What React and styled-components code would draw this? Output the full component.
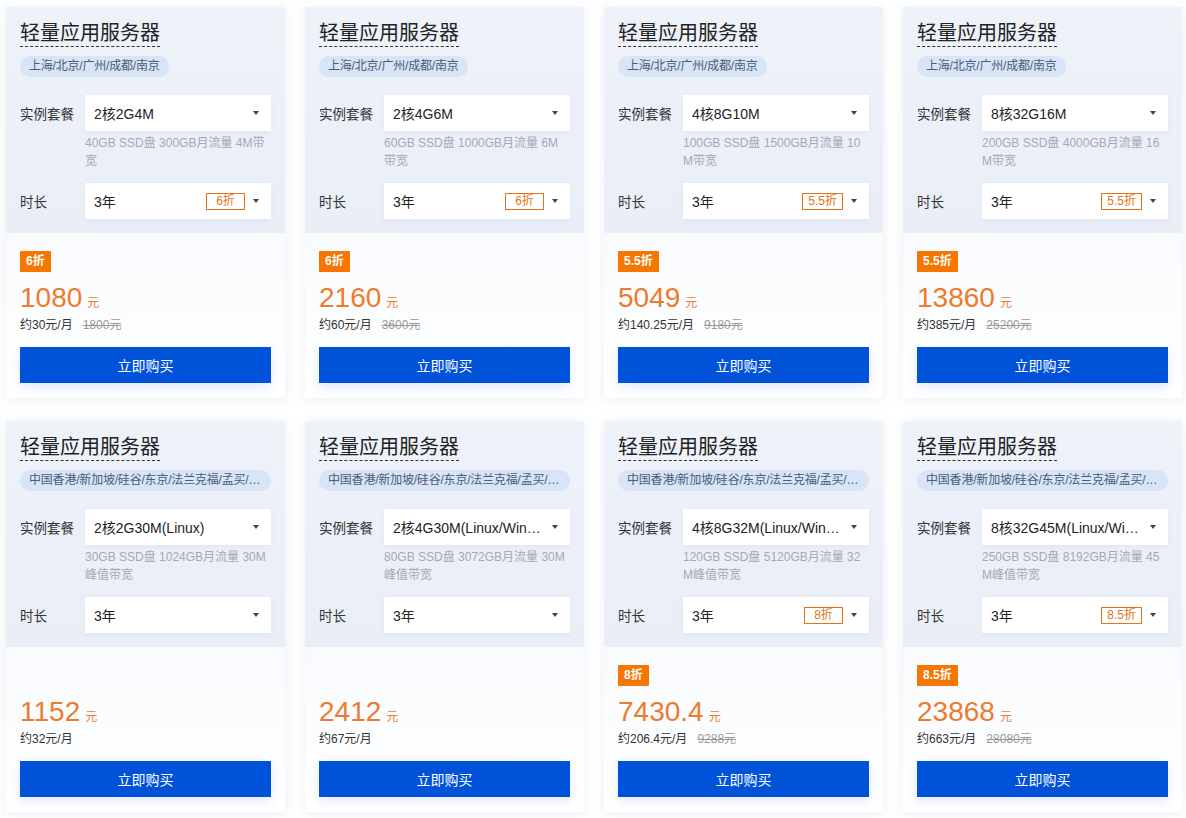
import React from "react";
import styled, { createGlobalStyle } from "styled-components";

const Global = createGlobalStyle`
  html, body { margin: 0; padding: 0; background: #ffffff; }
  body { font-family: "Liberation Sans", "Noto Sans CJK SC", sans-serif; color: #333; }
  * { box-sizing: border-box; }
`;

const Page = styled.div`
  padding: 7px 4px 6px 6px;
  display: grid;
  grid-template-columns: repeat(4, 279px);
  column-gap: 20px;
  row-gap: 23px;
`;

const Card = styled.div`
  display: flex;
  flex-direction: column;
  background: #fff;
  box-shadow: 0 2px 12px rgba(60, 90, 150, 0.1);
`;

const Head = styled.div`
  padding: 13px 14px 14px;
  background: linear-gradient(180deg, #eef2f9 0%, #e9eef7 100%);
`;

const Title = styled.div`
  display: inline-block;
  font-size: 20px;
  line-height: 26px;
  color: #222;
  border-bottom: 1px dashed #333;
`;

const Region = styled.div`
  display: block;
  width: fit-content;
  max-width: 100%;
  margin-top: 9px;
  height: 21px;
  line-height: 21px;
  padding: 0 9px;
  border-radius: 11px;
  background: #d8e4f7;
  color: #4d5b74;
  font-size: 12px;
  letter-spacing: -0.2px;
  white-space: nowrap;
  overflow: hidden;
  text-overflow: ellipsis;
`;

const Field = styled.div`
  display: flex;
  align-items: center;
  margin-top: ${(p) => p.$mt}px;
`;

const Label = styled.div`
  width: 65px;
  flex: none;
  font-size: 13.5px;
  color: #333;
`;

const Select = styled.div`
  flex: 1;
  min-width: 0;
  height: 36px;
  display: flex;
  align-items: center;
  gap: 8px;
  padding: 0 12px 0 9px;
  background: #fff;
  box-shadow: 0 2px 6px rgba(60, 90, 150, 0.06);
  font-size: 14px;
  color: #222;
`;

const SelText = styled.span`
  flex: 1;
  min-width: 0;
  white-space: nowrap;
  overflow: hidden;
  text-overflow: ellipsis;
`;

const OffTag = styled.span`
  flex: none;
  height: 17px;
  line-height: 15px;
  padding: 0 5px;
  min-width: 39px;
  text-align: center;
  border: 1px solid #e37318;
  color: #e37318;
  font-size: 12px;
`;

const Caret = styled.span`
  flex: none;
  width: 0;
  height: 0;
  border-left: 3.5px solid transparent;
  border-right: 3.5px solid transparent;
  border-top: 4px solid #444;
`;

const Desc = styled.div`
  margin: 3px 0 0 65px;
  font-size: 12px;
  line-height: 18px;
  color: #a3a9b5;
  word-break: break-all;
`;

const Foot = styled.div`
  flex: 1;
  padding: 18px 14px 15px;
  background: linear-gradient(180deg, #f8fafd 0%, #ffffff 100%);
`;

const BadgeSlot = styled.div`
  height: 21px;
`;

const Badge = styled.span`
  display: inline-block;
  height: 21px;
  line-height: 21px;
  padding: 0 6px;
  background: #f57600;
  color: #fff;
  font-size: 12px;
  font-weight: bold;
  border-radius: 1px;
`;

const PriceLine = styled.div`
  margin-top: 10px;
  height: 32px;
  line-height: 32px;
  color: #ed7b2f;
`;

const Amount = styled.span`
  font-size: 28px;
`;

const Unit = styled.span`
  font-size: 12px;
  margin-left: 5px;
`;

const Sub = styled.div`
  margin-top: 2px;
  font-size: 12px;
  line-height: 18px;
  color: #333;
`;

const Orig = styled.s`
  margin-left: 10px;
  color: #999;
`;

const Buy = styled.button`
  display: block;
  width: 100%;
  margin-top: 13px;
  height: 36px;
  border: none;
  background: #0052d9;
  color: #fff;
  font-family: inherit;
  font-size: 14px;
  box-shadow: 0 4px 10px rgba(0, 82, 217, 0.12);
`;

const CN = "上海/北京/广州/成都/南京";
const INTL = "中国香港/新加坡/硅谷/东京/法兰克福/孟买/首尔/曼谷/雅加达/多伦多";

const items = [
  { region: CN, plan: "2核2G4M", desc: "40GB SSD盘 300GB月流量 4M带宽", off: "6折", price: "1080", month: "约30元/月", orig: "1800元" },
  { region: CN, plan: "2核4G6M", desc: "60GB SSD盘 1000GB月流量 6M带宽", off: "6折", price: "2160", month: "约60元/月", orig: "3600元" },
  { region: CN, plan: "4核8G10M", desc: "100GB SSD盘 1500GB月流量 10M带宽", off: "5.5折", price: "5049", month: "约140.25元/月", orig: "9180元" },
  { region: CN, plan: "8核32G16M", desc: "200GB SSD盘 4000GB月流量 16M带宽", off: "5.5折", price: "13860", month: "约385元/月", orig: "25200元" },
  { region: INTL, plan: "2核2G30M(Linux)", desc: "30GB SSD盘 1024GB月流量 30M峰值带宽", off: null, price: "1152", month: "约32元/月", orig: null },
  { region: INTL, plan: "2核4G30M(Linux/Windows)", desc: "80GB SSD盘 3072GB月流量 30M峰值带宽", off: null, price: "2412", month: "约67元/月", orig: null },
  { region: INTL, plan: "4核8G32M(Linux/Windows)", desc: "120GB SSD盘 5120GB月流量 32M峰值带宽", off: "8折", price: "7430.4", month: "约206.4元/月", orig: "9288元" },
  { region: INTL, plan: "8核32G45M(Linux/Windows)", desc: "250GB SSD盘 8192GB月流量 45M峰值带宽", off: "8.5折", price: "23868", month: "约663元/月", orig: "28080元" },
];

function ProductCard({ it }) {
  return (
    <Card>
      <Head>
        <Title>轻量应用服务器</Title>
        <Region>{it.region}</Region>
        <Field $mt={18}>
          <Label>实例套餐</Label>
          <Select>
            <SelText>{it.plan}</SelText>
            <Caret />
          </Select>
        </Field>
        <Desc>{it.desc}</Desc>
        <Field $mt={13}>
          <Label>时长</Label>
          <Select>
            <SelText>3年</SelText>
            {it.off && <OffTag>{it.off}</OffTag>}
            <Caret />
          </Select>
        </Field>
      </Head>
      <Foot>
        <BadgeSlot>{it.off && <Badge>{it.off}</Badge>}</BadgeSlot>
        <PriceLine>
          <Amount>{it.price}</Amount>
          <Unit>元</Unit>
        </PriceLine>
        <Sub>
          {it.month}
          {it.orig && <Orig>{it.orig}</Orig>}
        </Sub>
        <Buy>立即购买</Buy>
      </Foot>
    </Card>
  );
}

export default function App() {
  return (
    <>
      <Global />
      <Page>
        {items.map((it, i) => (
          <ProductCard key={i} it={it} />
        ))}
      </Page>
    </>
  );
}
